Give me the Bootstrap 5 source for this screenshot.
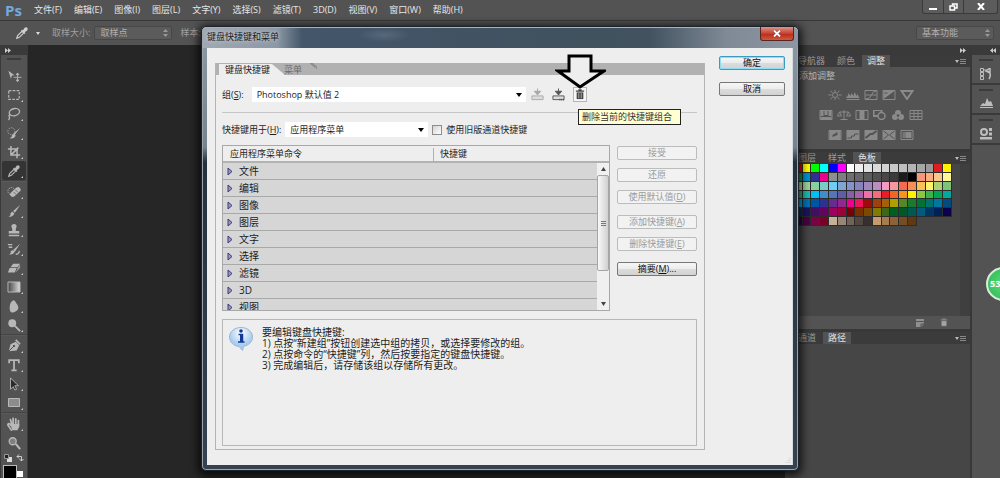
<!DOCTYPE html>
<html lang="zh-CN">
<head>
<meta charset="utf-8">
<meta name="viewport" content="width=device-width, initial-scale=1">
<title>键盘快捷键和菜单</title>
<link href="https://cdn.jsdelivr.net/npm/bootstrap@5.3.0/dist/css/bootstrap.min.css" rel="stylesheet">
<style>
  body { font: 9px/12px "Open Sans", "Noto Sans CJK SC", sans-serif; background: #262626; color: #dcdcdc; min-height: 100vh; overflow: hidden; }
  button, select, input { font: inherit; color: inherit; }
  button { border: 0; padding: 0; background: none; }
  svg { display: block; flex: none; }
  a { color: inherit; text-decoration: none; }
  select { appearance: none; background-repeat: no-repeat; }

  /* application bars */
  .menu-bar { height: 20px; background: #535353; padding-left: 5px; }
  .ps-logo { font: bold 15px/18px "Open Sans", sans-serif; color: #73a9dc; width: 29px; }
  .menu-links { gap: 12px; color: #e6e6e6; }
  .win-btns { border: 1px solid #3a3a3a; border-top: 0; border-radius: 0 0 3px 3px; height: 14px; margin-right: 2px; background: #5c5c5c; }
  .win-btns button { width: 20px; display: grid; place-items: center; }
  .win-btns button + button { border-left: 1px solid #3a3a3a; }
  .win-btns button:last-child { width: 34px; }
  .option-bar { height: 25px; background: #535353; border-top: 1px solid #383838; color: #a0a0a0; padding: 0 6px 0 15px; }
  .tool-arrow { margin: 0 12px 0 7px; }
  .dark-select { height: 14px; padding: 0 5px; line-height: 12px; border: 1px solid #474747; border-radius: 2px; color: #b0b0b0; background-color: #5b5b5b; background-position: right 3px center;
    background-image: url("data:image/svg+xml,%3Csvg xmlns='http://www.w3.org/2000/svg' width='5' height='8'%3E%3Cpath d='M0 3L2.5 0L5 3zM0 5L2.5 8L5 5z' fill='%23999'/%3E%3C/svg%3E"); width: 78px; }

  /* tool column */
  .tool-col { width: 28px; border-left: 1px solid #3a3a3a; border-right: 1px solid #3a3a3a; background: #535353; }
  .strip { height: 10px; background: #3a3a3a; color: #bbb; }
  .grip { width: 14px; height: 2px; background: #3c3c3c; margin: 3px auto 6px; }
  .tool { width: 24px; height: 19px; display: grid; place-items: center; margin: 0 auto; position: relative; color: #b8b8b8; border-radius: 2px; }
  .tool.more::after { content: ""; position: absolute; right: 3px; bottom: 2px; border: 1px solid; border-color: transparent #ccc #ccc transparent; }
  .tool.on { background: #343434; }
  .tool-sep { height: 2px; background: #444; border-bottom: 1px solid #5a5a5a; }
  .swap-row { height: 13px; padding: 2px 3px 0 3px; }
  .fg-color { width: 14px; height: 14px; background: #000; border: 1px solid #bbb; margin-left: 2px; }
  .bg-color { width: 6px; height: 6px; background: #fff; margin-top: 6px; }

  /* right panels */
  .panels { width: 185px; background: #464646; }
  .dock { width: 30px; background: #535353; border-left: 2px solid #383838; color: #bebebe; }
  .dock-cell { height: 30px; border-bottom: 2px solid #3a3a3a; }
  .dock-cell .grip { margin: 0 auto 7px; }
  .tab-row { height: 12px; background: #3b3b3b; color: #999; gap: 2px; }
  .tab-row button { height: 12px; padding: 0 5px; line-height: 12px; }
  .tab-row .on { background: #535353; color: #e2e2e2; }
  .adjust { height: 82px; background: #535353; color: #b4b4b4; padding-left: 14px; padding-top: 3px; }
  .adjust-icons { color: #8a8a8a; width: 126px; margin: 8px 0 0 9px; gap: 10px; }
  .gapline { height: 3px; background: #383838; }
  .swatch-grid { display: grid; width: 167px; height: 62px; grid-template-columns: repeat(19, 1fr); grid-template-rows: repeat(7, 1fr); }
  .swatch-grid i { border: solid #2c2c2c; border-width: 0 1px 1px 0; }
  .swatch-body { height: 152px; }
  .swatch-scroll { width: 10px; background: #3f3f3f; }
  .panel-foot { height: 13px; background: #535353; color: #8f8f8f; padding-right: 22px; }
  .fps { position: absolute; right: -20px; top: 267px; width: 34px; height: 34px; border-radius: 50%; background: radial-gradient(#55dd77, #2fb556); border: 2px solid #d8ecd9; color: #fff; font: bold 9px/30px "Open Sans", sans-serif; padding-left: 2px; }

  /* dialog */
  .dlg { position: absolute; top: 26px; left: 201px; right: 201px; padding: 0 5px 5px; color: #1c1c1c; border: 1px solid #1c232b; border-radius: 5px; background: linear-gradient(#8f99a4 0, #79838e 120px, #26313d 135px, #36424f); box-shadow: inset 0 0 0 1px #97a3af, 0 2px 8px 3px #000b; }
  .dlg-title { height: 21px; margin: 0 -5px; padding-left: 5px; border-radius: 5px 5px 0 0; box-shadow: inset 0 1px #a9b3bd;
    background: radial-gradient(ellipse 26px 7px at 182px 8px, #56687b, transparent), linear-gradient(90deg, #a0a9b3 0, #8c98a5 75px, #44566a 100px, #40525f 60%, #42525f 75%, #7f8a96 88%, #8d97a2); }
  .dlg-title h1 { font: inherit; margin: 0; line-height: 20px; text-shadow: 0 0 4px #dfe5ea; }
  .dlg-close { width: 34px; height: 14px; margin-right: 4px; border: 1px solid #5a2420; border-top: 0; border-radius: 0 0 3px 3px; background: linear-gradient(#dd9488, #c8402f 50%, #b32a1c 51%, #d3583f); display: grid; place-items: center; }
  .dlg-body { background: #eee; padding: 8px 7px 15px 8px; border: 1px solid #d6dce2; gap: 14px; border-width: 0 1px 0 0; position: relative; }
  .group-box { min-width: 0; margin-top: 7px; border: 1px solid #b4b4b4; border-top: 0; }
  .dlg-tabs { height: 12px; background: #b1b1b1; padding-left: 3px; }
  .dlg-tabs button { height: 12px; line-height: 14px; }
  .dlg-tabs .on { background: #eee; clip-path: polygon(0 1px, 53px 1px, 66px 100%, 0 100%); padding: 0 14px 0 6px; }
  .dlg-tabs .off { color: #6d6d6d; padding-right: 15px; background: linear-gradient(40deg, transparent 83%, #8a8a8a 84%, #999 92%, transparent 93%); }
  .group-in { padding: 12px 7px 3px 6px; }
  .line-row { height: 15px; }
  .lite-select { height: 15px; border: 0; background-color: #fff; padding: 0 5px; background-position: right 4px center; color: #1c1c1c;
    background-image: url("data:image/svg+xml,%3Csvg xmlns='http://www.w3.org/2000/svg' width='6' height='4'%3E%3Cpath d='M0 0H6L3 4z' fill='%23000'/%3E%3C/svg%3E"); }
  .set-select { width: 274px; }
  .use-select { width: 143px; }
  .sep { height: 1px; background: #c6c6c6; margin: 10px 0 9px; }
  .chk { appearance: none; width: 10px; height: 10px; margin: 0; border: 1px solid #8d8d8d; background: linear-gradient(135deg, #d2d2d2, #fff); }
  .icon-btns { gap: 7px; margin-left: 5px; }
  .icon-btn { width: 14px; height: 15px; display: grid; place-items: center; }
  .icon-btn.hot { border: 1px solid #b5b5b5; background: #f6f6f6; }
  .lists { margin: 8px 0; gap: 7px; }
  .cmd-box { min-width: 0; height: 166px; border: 1px solid #a8a8a8; overflow: hidden; position: relative; }
  .cmd-tbl { width: 100%; table-layout: fixed; border-collapse: separate; border-spacing: 0; }
  .cmd-tbl th { height: 17px; padding: 0 7px; font-weight: 400; border-bottom: 2px solid #b2b2b2; }
  .cmd-tbl th:first-child { width: 210px; }
  .cmd-tbl th + th { background: linear-gradient(#b0b0b0, #b0b0b0) 0 2px / 1px 14px no-repeat; }
  .cmd-tbl td { height: 17px; padding: 0 0 0 4px; background: #d6d6d6; border-bottom: 1px solid #a9a9a9; font-size: 10px; }
  .cmd-tbl td button { height: 14px; line-height: 14px; display: flex; align-items: center; gap: 6px; }
  .vbar { position: absolute; top: 17px; right: 0; bottom: 0; width: 12px; background: #f0f0f0; }
  .vbar .thumb { height: 96px; border: 1px solid #a5a5a5; border-radius: 2px; background: linear-gradient(90deg, #f8f8f8, #d0d0d0); display: grid; place-items: center; }
  .side { width: 80px; flex: none; padding-top: 1px; gap: 11px; }
  .push { height: 14px; line-height: 12px; white-space: nowrap; border: 1px solid #777; border-radius: 2px; background: linear-gradient(#f6f6f6, #ececec 48%, #dcdcdc 52%, #d2d2d2); color: #111; }
  .push:disabled { border-color: #bcbcbc; background: #f2f2f2; color: #9a9a9a; }
  .push.main { border-color: #3a9cc4; box-shadow: inset 0 0 0 1px #8edcf5; }
  .ok-col { width: 66px; flex: none; gap: 12px; }
  .info { height: 127px; border: 1px solid #b8b8b8; padding: 7px 6px; gap: 9px; font-size: 10px; line-height: 11px; }
  .tip { position: absolute; left: 371px; top: 61px; height: 16px; width: 103px; line-height: 14px; padding-left: 3px; background: #ffffd2; border: 1px solid #222; color: #333; }
  .arrow { position: absolute; left: 348px; top: 5px; }
  .size-grip { position: absolute; right: 1px; bottom: 1px; }
</style>
</head>
<body class="d-flex flex-column position-relative">

<svg width="0" height="0" class="position-absolute">
  <defs>
    <g id="dropper"><path d="M2 14l1-3 5-5 2 2-5 5z" fill="none" stroke="currentColor" stroke-width="1.3"/><path d="M7 5l1-1 1 1 2-3q2-1 3 0t0 3l-3 2 1 1-1 1z" fill="currentColor"/></g>
    <g id="panelmenu"><path d="M0 2h4L2 5z" fill="#bbb"/><path d="M5 1.500h6M5 3.500h6M5 5.500h6" stroke="#888"/></g>
    <g id="can"><path d="M1 2.500h10M4 1h4" stroke="currentColor" stroke-width="1.400"/><path d="M2 4h8v8H2z" fill="currentColor"/><path d="M4.500 5v6M7.500 5v6" stroke="#eee" stroke-width=".7"/></g>
    <g id="tray"><path d="M1 8h12v4H1z" fill="#ddd" stroke="currentColor"/><path d="M7 0v5M3.500 3L7 7l3.500-4z" fill="currentColor" stroke="currentColor"/></g>
  </defs>
</svg>

<header>
  <nav class="menu-bar d-flex align-items-center">
    <span class="ps-logo">Ps</span>
    <div class="menu-links d-flex flex-grow-1">
      <a href="#">文件(F)</a><a href="#">编辑(E)</a><a href="#">图像(I)</a><a href="#">图层(L)</a><a href="#">文字(Y)</a><a href="#">选择(S)</a><a href="#">滤镜(T)</a><a href="#">3D(D)</a><a href="#">视图(V)</a><a href="#">窗口(W)</a><a href="#">帮助(H)</a>
    </div>
    <div class="win-btns d-flex align-self-start">
      <button aria-label="最小化"><svg width="8" height="8"><path d="M0 5h8v2H0z" fill="#fff"/></svg></button>
      <button aria-label="还原"><svg width="9" height="8" fill="none" stroke="#fff" stroke-width="1.500"><path d="M3.500 2.500v-1.500h4.500v4h-2"/><path d="M1 3h4.500v4H1z"/></svg></button>
      <button aria-label="关闭"><svg width="8" height="7" stroke="#fff" stroke-width="2"><path d="M1 0l6 7M7 0L1 7"/></svg></button>
    </div>
  </nav>
  <div class="option-bar d-flex align-items-center">
    <svg width="14" height="14" viewBox="0 0 16 16" color="#d0d0d0"><use href="#dropper"/></svg>
    <svg class="tool-arrow" width="4" height="3"><path d="M0 0h4L2 3z" fill="#ddd"/></svg>
    <label for="sample">取样大小:</label>
    <select id="sample" class="dark-select ms-1"><option>取样点</option></select>
    <span class="ms-2 flex-grow-1">样本:</span>
    <select class="dark-select" aria-label="工作区"><option>基本功能</option></select>
  </div>
</header>

<main class="d-flex flex-grow-1">
  <aside class="tool-col">
    <div class="strip d-flex align-items-center ps-1"><svg width="6" height="5"><path d="M0 0l3 2.500L0 5zM3 0l3 2.500L3 5z" fill="#ccc"/></svg></div>
    <div class="grip"></div>
    <button class="tool" aria-label="移动"><svg width="15" height="14" viewBox="0 0 16 16"><path d="M1 2l7 5-3 .5-1 4z" fill="currentColor"/><path d="M11.500 5v9M7 9.500h9M10 6.500l1.500-2 1.500 2zM10 12.500l1.500 2 1.500-2z" fill="currentColor" stroke="currentColor"/></svg></button>
    <button class="tool more" aria-label="选框"><svg width="14" height="14" viewBox="0 0 16 16"><path d="M2 3h12v10H2z" fill="none" stroke="currentColor" stroke-width="1.300" stroke-dasharray="3 1.500"/></svg></button>
    <button class="tool more" aria-label="套索"><svg width="14" height="14" viewBox="0 0 16 16" fill="none" stroke="currentColor" stroke-width="1.500"><ellipse cx="8.500" cy="6" rx="6" ry="4" transform="rotate(-15 8 6)"/><path d="M4 9q-3 0-1 3l-1 3"/></svg></button>
    <button class="tool more" aria-label="快速选择"><svg width="14" height="14" viewBox="0 0 16 16"><circle cx="5" cy="6" r="4" fill="none" stroke="currentColor" stroke-dasharray="1.500 1.500"/><path d="M15 2l-6 8-2-1zM8 9l2 2q-2 4-7 3 3-1 3-4z" fill="currentColor"/></svg></button>
    <button class="tool more" aria-label="裁剪"><svg width="14" height="14" viewBox="0 0 16 16"><path d="M4.500 1v10.500H15M1 4.500h10.500V15M5 11l8-8" fill="none" stroke="currentColor" stroke-width="1.700"/></svg></button>
    <button class="tool more on" aria-label="吸管"><svg width="14" height="14" viewBox="0 0 16 16"><use href="#dropper"/></svg></button>
    <div class="tool-sep"></div>
    <button class="tool more" aria-label="修复画笔"><svg width="15" height="14" viewBox="0 0 16 16"><circle cx="4.500" cy="7" r="4" fill="none" stroke="currentColor" stroke-dasharray="1.500 1"/><rect x="2" y="5" width="14" height="6" rx="3" transform="rotate(-42 9 8)" fill="currentColor"/><path d="M7 8l3 3M9 5.500l3 3" stroke="#666"/></svg></button>
    <button class="tool more" aria-label="画笔"><svg width="14" height="14" viewBox="0 0 16 16"><path d="M15 1L9 10 7 8zM6 8.500L8.500 11q-2 4-7 3.500 3-1 2.500-4z" fill="currentColor"/></svg></button>
    <button class="tool more" aria-label="仿制图章"><svg width="14" height="14" viewBox="0 0 16 16"><path d="M6 7L5 4q0-3 3-3t3 3l-1 3v2h4v3H2V9h4zM2 13.500h12V15H2z" fill="currentColor"/></svg></button>
    <button class="tool more" aria-label="历史画笔"><svg width="14" height="14" viewBox="0 0 16 16"><path d="M15 2L9 11 7 9zM6 9l3 2q-2 4-7 3 3-1 2-3z" fill="currentColor"/><path d="M1 3h5M2 6h4M10 14q4 0 4-4" fill="none" stroke="currentColor" stroke-width="1.500"/></svg></button>
    <button class="tool more" aria-label="橡皮擦"><svg width="14" height="14" viewBox="0 0 16 16"><path d="M7 3h8l-3 4H4zM3 8h8l-2 5H1z" fill="currentColor"/><path d="M12 8l3-4v4l-5 5z" fill="#999"/></svg></button>
    <button class="tool more" aria-label="渐变"><svg width="14" height="12" viewBox="0 0 14 12"><defs><linearGradient id="gr"><stop stop-color="#444"/><stop offset="1" stop-color="#ddd"/></linearGradient></defs><path d="M1 1h12v10H1z" fill="url(#gr)" stroke="currentColor"/></svg></button>
    <button class="tool more" aria-label="模糊"><svg width="14" height="14" viewBox="0 0 16 16"><path d="M8 1q5 6 5 9t-5 5-5-5 5-9z" fill="currentColor"/></svg></button>
    <button class="tool more" aria-label="减淡"><svg width="14" height="14" viewBox="0 0 16 16"><circle cx="6" cy="6" r="4.500" fill="currentColor"/><path d="M9 9l6 6" stroke="currentColor" stroke-width="2"/></svg></button>
    <div class="tool-sep"></div>
    <button class="tool more" aria-label="钢笔"><svg width="14" height="14" viewBox="0 0 16 16"><path d="M2 14l2-8 6-3 4 4-3 6z" fill="currentColor"/><path d="M10 1l5 5" stroke="currentColor" stroke-width="2"/><path d="M2 14l6-6" stroke="#444"/><circle cx="8" cy="8" r="1.200" fill="#444"/></svg></button>
    <button class="tool more" aria-label="文字"><svg width="14" height="14" viewBox="0 0 16 16"><path d="M2.500 6V2.500h11V6M8 2.500V14M5 14h6" fill="none" stroke="currentColor" stroke-width="2"/></svg></button>
    <button class="tool more" aria-label="路径选择"><svg width="14" height="14" viewBox="0 0 16 16"><path d="M4 1l9 9H9l2 4-2 1-2-4-3 3z" fill="#2b2b2b" stroke="currentColor"/></svg></button>
    <button class="tool more" aria-label="矩形"><svg width="14" height="12"><path d="M1.500 1.500h11v8h-11z" fill="#8c8c8c" stroke="currentColor"/></svg></button>
    <div class="tool-sep"></div>
    <button class="tool more" aria-label="抓手"><svg width="14" height="14" viewBox="0 0 16 16"><path d="M5 15L1 9q0-2 2-1l2 2V7L4 3M7 8V1.500M10 8V2M13 9V4" fill="none" stroke="currentColor" stroke-width="2" stroke-linecap="round"/><path d="M4 8h10v3l-2 4H6z" fill="currentColor"/></svg></button>
    <button class="tool" aria-label="缩放"><svg width="14" height="14" viewBox="0 0 16 16"><circle cx="6.500" cy="6" r="4" fill="#808080" stroke="currentColor" stroke-width="1.500"/><path d="M10 9l5 6" stroke="currentColor" stroke-width="2.400"/></svg></button>
    <div class="swap-row d-flex justify-content-between">
      <svg width="8" height="8"><path d="M3 3h5v5H3z" fill="#ddd"/><path d="M.5.5h4v4h-4z" fill="#222" stroke="#999"/></svg>
      <svg width="8" height="8" fill="none" stroke="#ccc"><path d="M1 2.500h4.500V7M3 .5l-2 2 2 2M3.500 5l2 2 2-2"/></svg>
    </div>
    <div class="d-flex"><div class="fg-color"></div><div class="bg-color"></div></div>
  </aside>

  <section class="flex-grow-1"></section>

  <aside class="panels d-flex flex-column">
    <div class="strip d-flex align-items-center justify-content-end pe-1"><svg width="6" height="5"><path d="M0 0l3 2.500L0 5zM3 0l3 2.500L3 5z" fill="#ccc"/></svg></div>
    <div class="tab-row d-flex align-items-center ps-2">
      <button>导航器</button><button>颜色</button><button class="on">调整</button>
      <svg class="ms-auto me-1" width="11" height="7"><use href="#panelmenu"/></svg>
    </div>
    <div class="adjust">
      <div>添加调整</div>
      <div class="adjust-icons d-flex flex-column align-items-center" id="adjust"></div>
    </div>
    <div class="gapline"></div>
    <div class="tab-row d-flex align-items-center ps-2">
      <button>图层</button><button>样式</button><button class="on">色板</button>
      <svg class="ms-auto me-1" width="11" height="7"><use href="#panelmenu"/></svg>
    </div>
    <div class="swatch-body d-flex justify-content-between"><div class="swatch-grid" id="swatches"></div><div class="swatch-scroll"></div></div>
    <div class="panel-foot d-flex align-items-center justify-content-end gap-3">
      <svg width="8" height="8"><path d="M0 0h8v5L5 8H0z" fill="currentColor"/><path d="M5 8V5h3M0 2.500h8" stroke="#555" fill="none"/></svg>
      <svg width="8" height="9" viewBox="0 0 12 13"><use href="#can"/></svg>
    </div>
    <div class="gapline"></div>
    <div class="tab-row d-flex align-items-center ps-2">
      <button>通道</button><button class="on">路径</button>
      <svg class="ms-auto me-1" width="11" height="7"><use href="#panelmenu"/></svg>
    </div>
  </aside>

  <aside class="dock">
    <div class="strip d-flex align-items-center justify-content-end pe-1"><svg width="6" height="5"><path d="M3 0L0 2.500L3 5zM6 0L3 2.500L6 5z" fill="#ccc"/></svg></div>
    <div class="dock-cell pt-1"><div class="grip"></div><svg class="mx-auto" width="12" height="12"><path d="M.5.500h3v3h-3zM.5 4.500h3v3h-3zM.5 8.500h3v3h-3z" fill="none" stroke="currentColor"/><path d="M4 2h3" stroke="currentColor"/><path d="M8 3q4 3 1 8M6 3l4-3v5z" fill="none" stroke="currentColor" stroke-width="1.500"/></svg></div>
    <div class="dock-cell pt-1"><div class="grip"></div><svg class="mx-auto" width="13" height="11"><path d="M0 8l3-3 2 1 2-6 2 4 2-1 2 5z M0 9h13v1H0z" fill="currentColor"/></svg></div>
    <div class="dock-cell pt-1"><div class="grip"></div><svg class="mx-auto" width="12" height="12"><circle cx="4" cy="4" r="3" fill="none" stroke="currentColor" stroke-width="2"/><path d="M9 0h3v3H9zM9 4.500h3v3H9zM0 9h12v2.500H0z" fill="currentColor"/></svg></div>
  </aside>
</main>

<div class="fps">53</div>

<div class="dlg" role="dialog" aria-labelledby="dlgTitle">
  <div class="dlg-title d-flex justify-content-between align-items-start">
    <h1 id="dlgTitle">键盘快捷键和菜单</h1>
    <button class="dlg-close" aria-label="关闭"><svg width="8" height="7"><path d="M1 .5l6 6M7 .5l-6 6" stroke="#7a2b22" stroke-width="3"/><path d="M1 .5l6 6M7 .5l-6 6" stroke="#fff" stroke-width="2"/></svg></button>
  </div>
  <div class="dlg-body d-flex">
    <div class="group-box flex-grow-1">
      <div class="dlg-tabs d-flex"><button class="on">键盘快捷键</button><button class="off">菜单</button></div>
      <div class="group-in">
        <div class="line-row d-flex align-items-center">
          <label for="set" class="me-1">组(<u>S</u>):</label>
          <select id="set" class="lite-select set-select ms-1"><option>Photoshop 默认值 2</option></select>
          <div class="icon-btns d-flex">
            <button class="icon-btn" aria-label="存储" disabled><svg width="13" height="13" viewBox="0 0 14 13" color="#a8a8a8"><use href="#tray"/></svg></button>
            <button class="icon-btn" aria-label="新建组"><svg width="13" height="13" viewBox="0 0 14 13" color="#555"><use href="#tray"/><path d="M8 12h6" stroke="#555" stroke-dasharray="1 1" stroke-width="2"/></svg></button>
            <button class="icon-btn hot" aria-label="删除组"><svg width="10" height="11" viewBox="0 0 12 13" color="#444"><use href="#can"/></svg></button>
          </div>
        </div>
        <div class="sep"></div>
        <div class="line-row d-flex align-items-center">
          <label for="use" class="me-1">快捷键用于(<u>H</u>):</label>
          <select id="use" class="lite-select use-select"><option>应用程序菜单</option></select>
          <input type="checkbox" class="chk ms-1 me-1" id="legacy"><label for="legacy">使用旧版通道快捷键</label>
        </div>
        <div class="lists d-flex">
          <div class="cmd-box flex-grow-1">
            <table class="cmd-tbl">
              <thead><tr><th>应用程序菜单命令</th><th>快捷键</th></tr></thead>
              <tbody id="commands"></tbody>
            </table>
            <div class="vbar d-flex flex-column">
              <svg class="mx-auto my-1" width="5" height="4"><path d="M0 4h5L2.500 0z" fill="#444"/></svg>
              <div class="thumb"><svg width="5" height="5"><path d="M0 .5h5M0 2.500h5M0 4.500h5" stroke="#777"/></svg></div>
              <svg class="mx-auto mt-auto mb-1" width="5" height="4"><path d="M0 0h5L2.500 4z" fill="#444"/></svg>
            </div>
          </div>
          <div class="side d-flex flex-column">
            <div class="d-grid gap-2"><button class="push" disabled>接受</button><button class="push" disabled>还原</button><button class="push" disabled>使用默认值(<u>D</u>)</button></div>
            <div class="d-grid gap-2"><button class="push" disabled>添加快捷键(<u>A</u>)</button><button class="push" disabled>删除快捷键(<u>E</u>)</button></div>
            <button class="push">摘要(<u>M</u>)...</button>
          </div>
        </div>
        <div class="info d-flex align-items-start">
          <svg width="24" height="24"><defs><radialGradient id="bub" cy=".25"><stop stop-color="#fff"/><stop offset="1" stop-color="#a9cdf0"/></radialGradient></defs><path d="M12 .5c6.500 0 11.500 4 11.500 9.500 0 5-4 8.500-9 9.300l-1 4.200-3.500-4C4.500 19 .5 15 .5 10 .5 4.500 5.500.5 12 .5z" fill="url(#bub)" stroke="#9fb6cc"/><circle cx="12" cy="4" r="1.800" fill="#123a94"/><path d="M9.500 7.500h4v7M9 15h6.500" fill="none" stroke="#123a94" stroke-width="1.500"/><path d="M12.300 7v8" stroke="#123a94" stroke-width="2.600"/></svg>
          <div><div>要编辑键盘快捷键:</div><div>1) 点按“新建组”按钮创建选中组的拷贝，或选择要修改的组。</div><div>2) 点按命令的“快捷键”列，然后按要指定的键盘快捷键。</div><div>3) 完成编辑后，请存储该组以存储所有更改。</div></div>
        </div>
      </div>
    </div>
    <div class="ok-col d-flex flex-column"><button class="push main">确定</button><button class="push">取消</button></div>
    <svg class="arrow" width="51" height="38"><path d="M14 3h22v15h13L25 34 3 18h11z" fill="#eee" stroke="#000" stroke-width="3"/></svg>
    <div class="tip">删除当前的快捷键组合</div>
    <svg class="size-grip" width="6" height="6" stroke="#c4c4c4"><path d="M5 0v6M3 2v4M1 4v2" stroke-dasharray="1 1"/></svg>
  </div>
</div>

<script src="https://cdn.jsdelivr.net/npm/bootstrap@5.3.0/dist/js/bootstrap.bundle.min.js"></script>
<script>
  const swatchRows = [
    'f00 f00 ff0 0f0 0ff 00f f0f fff eee e3e3e3 dadada d1d1d1 c8c8c8 bfbfbf b4b4b4 a6a6a6 9a9a9a e01b22 fff200',
    '0a5 00a651 0092d4 2e3192 ec008c 8f8f8f 7f7f7f 6f6f6f 666 5c5c5c 515151 474747 3b3b3b 1c1c1c 000 f7977a f9ad81 fdc68a fff79a',
    'c4df9b c4df9b a2d39c 8ad09c 7accc8 6ecff6 7ea7d8 8493ca 8882be a187be bc8dbf f49ac2 f6989d f26c4f f68e55 f5c455 fff467 acd372 7cc576',
    '3bb878 3bb878 1abbb4 00bff3 438cca 5574b9 605ca8 855fa8 a763a8 f06ea9 f26d7d ed1c24 f26522 f7941d fff200 8dc73f 39b54a 00a651 00a99d',
    '00a99d 00aeef 0072bc 0054a6 2e3192 662d91 92278f ec008c ed145b 9e0b0f a0410d a36209 aba000 598527 1a7b30 007236 00746b 0076a3 004b80',
    '004b80 003471 1b1464 440e62 630460 9e005d 9e0039 790000 7b2e00 7d4900 827b00 406618 005e20 005826 005952 005b7f 003663 002157 0d004c',
    '32004b 32004b 4b0049 7b0046 7a0026 c7b299 998675 736357 534741 362f2d c69c6d a67c52 8c6239 754c24 603913'
  ];
  document.getElementById('swatches').innerHTML = swatchRows.map(r => r.split(' ').map(c => `<i style="background:#${c}"></i>`).join('')).join('');

  document.getElementById('commands').innerHTML = ['文件', '编辑', '图像', '图层', '文字', '选择', '滤镜', '3D', '视图'].map(n =>
    `<tr><td colspan="2"><button><svg width="6" height="9"><path d="M1 1v7l4-3.500z" fill="#9a9ab8" stroke="#3b3b7c"/></svg>${n}</button></td></tr>`).join('');

  const box = '<path d="M.5 .5h12v9H.5z" fill="none" stroke="currentColor"/>';
  const solid = '<path d="M0 0h13v10H0z" fill="currentColor"/>';
  const adjustRows = [
    ['<circle cx="6.500" cy="5" r="2.500" fill="none" stroke="currentColor"/><path d="M6.500 0v2M6.500 8v2M0 5h3M10 5h3M2 1l2 1.500M11 1L9 2.500M2 9l2-1.500M11 9L9 7.500" stroke="currentColor"/>',
     '<path d="M0 8V5l1 2 1-4 2 3 1-3 2 3 1-4 2 4 1-2 2 4z" fill="currentColor"/><path d="M0 9.500h13" stroke="currentColor"/>',
     box + '<path d="M1 9Q6 9 7 5T12 1M1 5h11" stroke="currentColor" fill="none"/>',
     box + '<path d="M1 9L12 1H1z" fill="currentColor"/><path d="M2 3h3M8 7h3" stroke="#555"/>',
     '<path d="M1 1h11L6.500 9z" fill="none" stroke="currentColor" stroke-width="2"/>'],
    [box + '<path d="M1 1h3v5H1zM5 1h3v4H5zM9 1h3v5H9zM1 7h11v2H1z" fill="currentColor"/>',
     '<path d="M6.500 0v9M3 9.500h7M2 2h9M2 2L0 6h4zM11 2L9 6h4z" fill="none" stroke="currentColor"/>',
     box + '<path d="M4 1h5v8H4z" fill="currentColor"/>',
     '<path d="M0 0h8v6H0z" fill="none" stroke="currentColor" stroke-width="2"/><circle cx="8" cy="6" r="3.500" fill="#535353" stroke="currentColor" stroke-width="1.500"/>',
     '<circle cx="6.500" cy="3" r="3" fill="currentColor"/><circle cx="3.500" cy="7" r="3" fill="currentColor"/><circle cx="9.500" cy="7" r="3" fill="currentColor"/><circle cx="6.500" cy="5.500" r="1.300" fill="#535353"/>',
     box + '<path d="M1 3.500h11M1 6.500h11M4.500 1v8M8.500 1v8" stroke="currentColor"/>'],
    [box + '<path d="M1 1h11v8H1z" fill="currentColor"/><path d="M4 7V5l5-3v3z" fill="#535353"/>',
     solid + '<path d="M1 8h4V6h3V4h4" stroke="#535353" fill="none"/>',
     solid + '<path d="M1 8l5-4h2l4-3" stroke="#535353" stroke-width="2" fill="none"/>',
     solid + '<path d="M1 1l5 4-5 4M12 1L7 5l5 4" stroke="#535353" fill="none"/>',
     box + '<path d="M2 2h3v6H2z" fill="#777"/><path d="M5 2h6v6H5z" fill="currentColor"/>']
  ];
  document.getElementById('adjust').innerHTML = adjustRows.map(r =>
    '<div class="d-flex gap-1">' + r.map(p => `<svg width="14" height="10" viewBox="0 0 13 10">${p}</svg>`).join('') + '</div>').join('');
</script>
</body>
</html>
